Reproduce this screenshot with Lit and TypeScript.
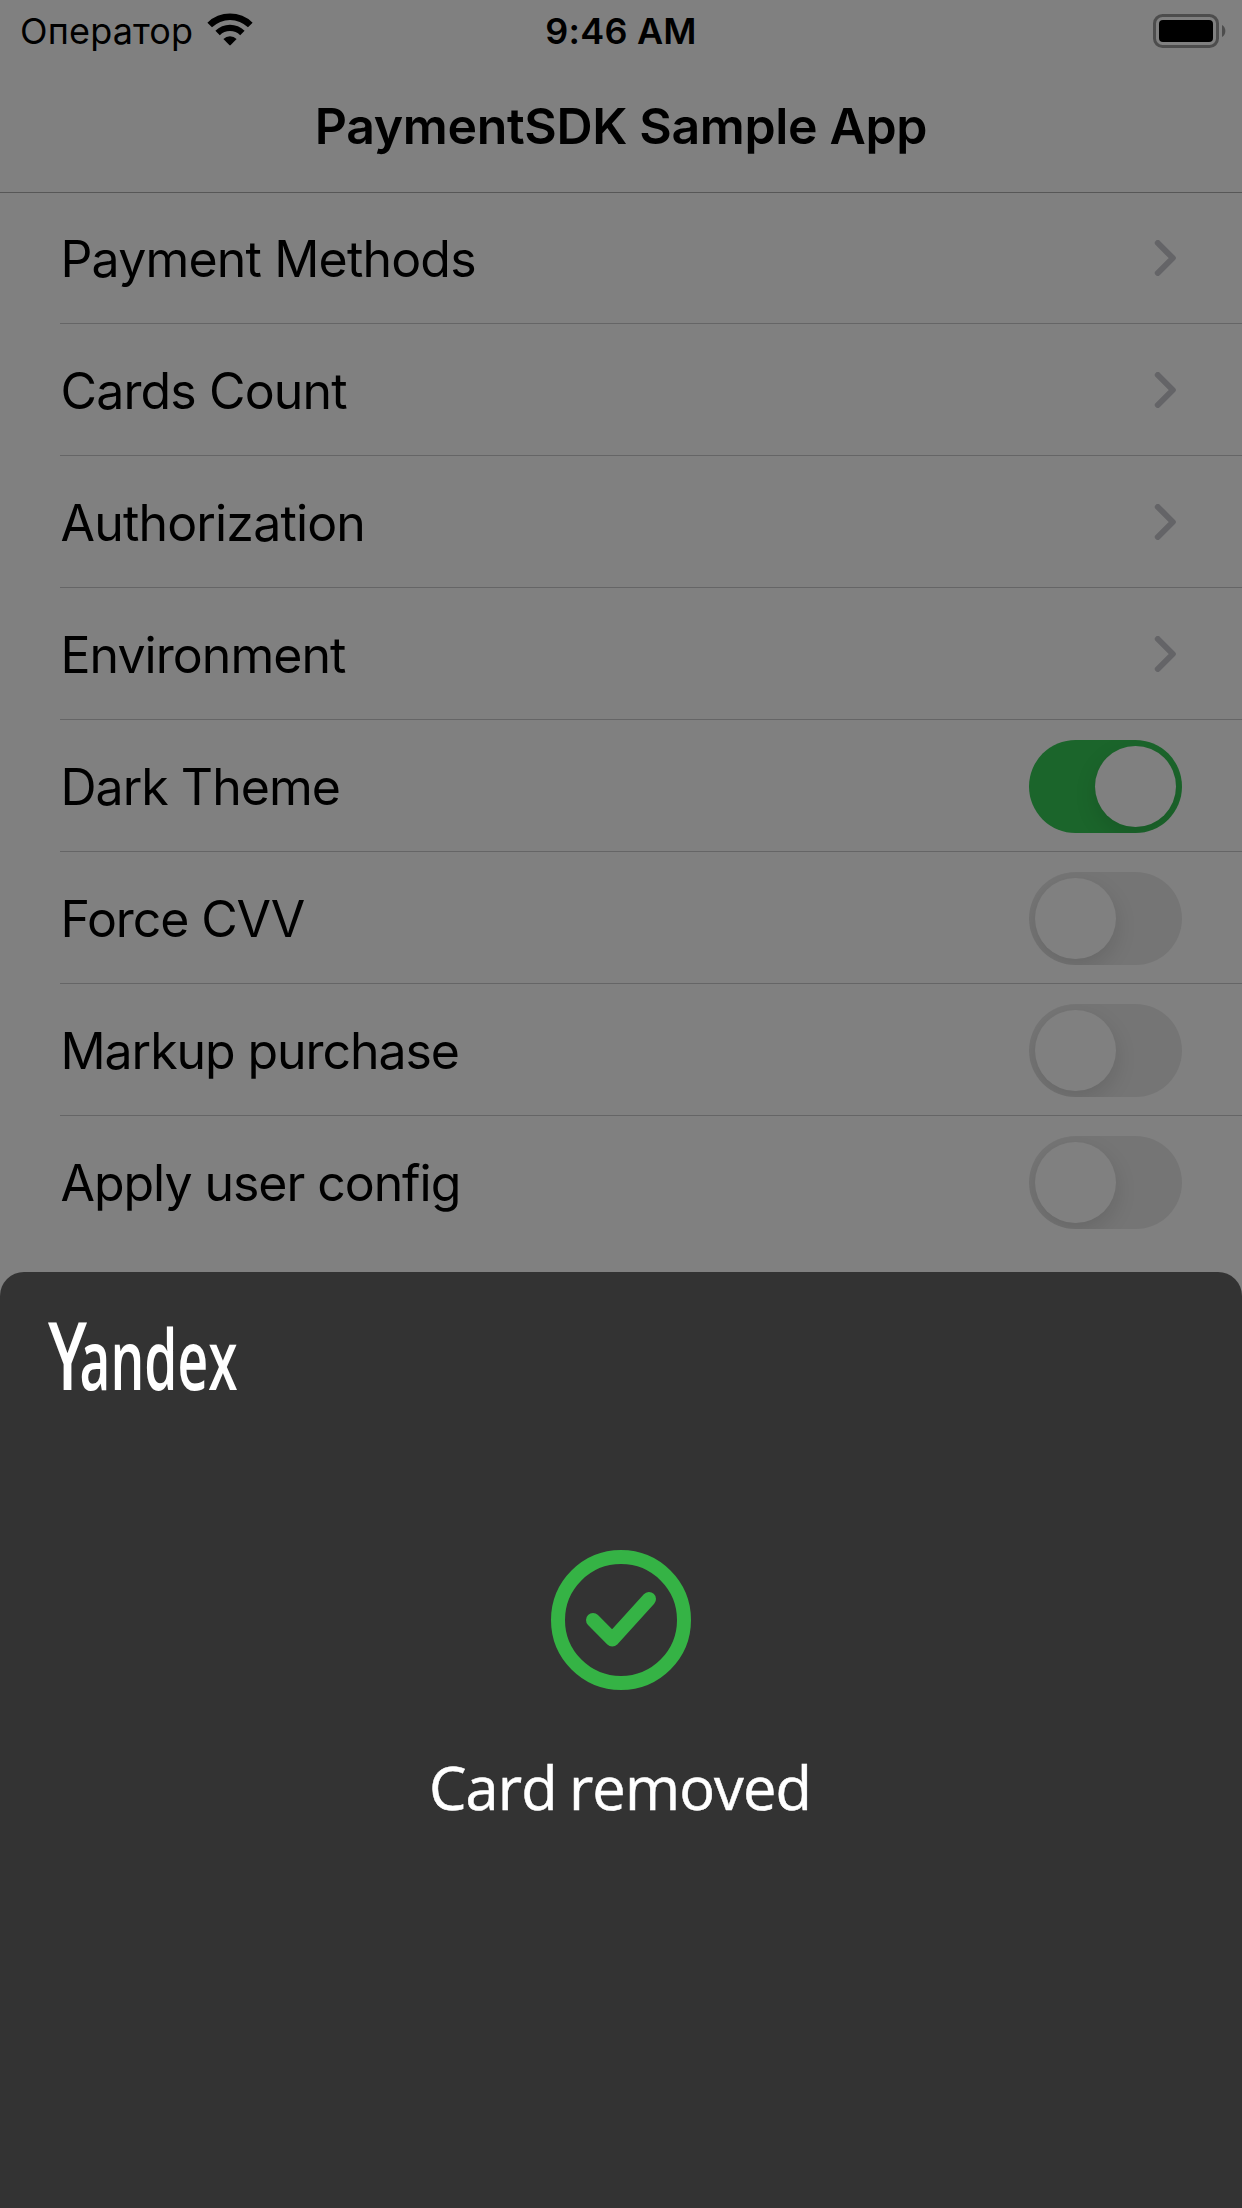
import { LitElement, html, css, nothing } from "lit";
import { customElement, property } from "lit/decorators.js";

interface Setting {
  label: string;
  kind: "link" | "toggle";
  /** Letter spacing of the label, in pixels. */
  tracking: number;
  on?: boolean;
}

const SETTINGS: Setting[] = [
  { label: "Payment Methods", kind: "link", tracking: -0.82 },
  { label: "Cards Count", kind: "link", tracking: -0.85 },
  { label: "Authorization", kind: "link", tracking: -0.83 },
  { label: "Environment", kind: "link", tracking: -0.95 },
  { label: "Dark Theme", kind: "toggle", tracking: -0.98, on: true },
  { label: "Force CVV", kind: "toggle", tracking: -1.1 },
  { label: "Markup purchase", kind: "toggle", tracking: -1.07 },
  { label: "Apply user config", kind: "toggle", tracking: -1.05 },
];

@customElement("status-bar")
class StatusBar extends LitElement {
  static styles = css`
    :host {
      display: grid;
      grid-template-columns: 1fr auto 1fr;
      align-items: center;
      height: 62px;
      padding: 0 16px 2px;
      box-sizing: border-box;
      font-size: 36px;
      line-height: 60px;
    }
    .left {
      display: flex;
      align-items: center;
      gap: 14px;
      padding-left: 4px;
    }
    .carrier {
      padding-top: 1px;
      letter-spacing: 0.15px;
    }
    .time {
      font-weight: 600;
      letter-spacing: 0.2px;
    }
    .wifi {
      display: block;
      margin-top: -1px;
    }
    .battery {
      display: block;
      justify-self: end;
    }
  `;

  render() {
    return html`
      <div class="left">
        <span class="carrier">Оператор</span>
        <svg class="wifi" width="46" height="34" viewBox="0 0 46 34">
          <path d="M0.4 9.7 A32.3 32.3 0 0 1 45.6 9.7 L41 14.3 A25.8 25.8 0 0 0 5 14.3 Z" />
          <path d="M8.4 17.8 A20.8 20.8 0 0 1 37.6 17.8 L33.2 22.2 A14.6 14.6 0 0 0 12.8 22.2 Z" />
          <path d="M16.4 26 A9.6 9.6 0 0 1 29.6 26 L23.7 32.1 Q23 32.8 22.3 32.1 Z" />
        </svg>
      </div>
      <span class="time">9:46 AM</span>
      <svg class="battery" width="73" height="34" viewBox="0 0 73 34">
        <rect x="1.5" y="1.5" width="63" height="31" rx="8" fill="none" stroke="#4d4d4d" stroke-width="3" />
        <rect x="6" y="6" width="54" height="22" rx="4" />
        <path d="M69 11 A7 7 0 0 1 69 23 Z" fill="#4d4d4d" />
      </svg>
    `;
  }
}

@customElement("toggle-switch")
class ToggleSwitch extends LitElement {
  @property({ type: Boolean, reflect: true }) on = false;

  static styles = css`
    :host {
      display: flex;
      width: 153px;
      height: 93px;
      padding: 6px;
      box-sizing: border-box;
      border-radius: 47px;
      overflow: hidden;
      background: #757575;
    }
    :host([on]) {
      justify-content: flex-end;
      background: #1b652b;
    }
    .knob {
      width: 81px;
      height: 81px;
      border-radius: 50%;
      background: #808080;
      box-shadow: 0 8px 22px rgba(0, 0, 0, 0.12);
    }
  `;

  render() {
    return html`<div class="knob"></div>`;
  }
}

@customElement("setting-row")
class SettingRow extends LitElement {
  @property({ attribute: false }) setting!: Setting;

  static styles = css`
    :host {
      display: flex;
      align-items: center;
      justify-content: space-between;
      height: 132px;
      padding: 1px 60px 0 0;
      margin-left: 60px;
      box-sizing: border-box;
      border-bottom: 1px solid #656566;
    }
    :host(:first-of-type) {
      height: 131px;
      padding-top: 0;
    }
    :host(:last-of-type) {
      border-bottom-color: transparent;
    }
    .label {
      font-size: 50px;
      line-height: 60px;
      padding: 2px 0 0 0.5px;
    }
    .chevron {
      display: block;
      margin-right: 6px;
    }
    .switch {
      margin-top: 1px;
    }
  `;

  render() {
    if (!this.setting) return nothing;
    const { label, kind, tracking, on } = this.setting;
    return html`
      <span class="label" style="letter-spacing:${tracking}px">${label}</span>
      ${kind === "link"
        ? html`<svg class="chevron" width="22" height="36" viewBox="0 0 22 36">
            <path
              d="M3.8 3 L18.8 18 L3.8 33"
              fill="none"
              stroke="#646467"
              stroke-width="6"
              stroke-linecap="round"
              stroke-linejoin="round"
            />
          </svg>`
        : html`<toggle-switch class="switch" ?on=${!!on}></toggle-switch>`}
    `;
  }
}

@customElement("result-sheet")
class ResultSheet extends LitElement {
  static styles = css`
    :host {
      display: flex;
      flex-direction: column;
      align-items: center;
      flex: 1;
      padding: 10px 40px 0;
      box-sizing: border-box;
      border-radius: 24px 24px 0 0;
      background: #333333;
      color: #ffffff;
      font-family: "Open Sans", sans-serif;
    }
    .logo {
      display: block;
      align-self: flex-start;
      font-weight: 600;
    }
    .done {
      display: block;
      margin-top: 108px;
    }
    .message {
      margin-top: 57px;
      padding-right: 2px;
      font-size: 59.5px;
      line-height: 80px;
      letter-spacing: -0.85px;
      word-spacing: -2.5px;
      -webkit-text-stroke: 0.5px #ffffff;
    }
  `;

  render() {
    return html`
      <svg class="logo" width="340" height="160" viewBox="0 0 340 160" fill="#ffffff">
        <text x="8" y="108">
          <tspan x="8" font-size="95" textLength="39" lengthAdjust="spacingAndGlyphs">Y</tspan><tspan
            x="39.5"
            font-size="83"
            textLength="158"
            lengthAdjust="spacingAndGlyphs"
            >andex</tspan
          >
        </text>
      </svg>
      <svg class="done" width="140" height="140" viewBox="0 0 140 140" fill="none" stroke="#35b345" stroke-width="14">
        <circle cx="70" cy="70" r="63" />
        <path d="M42 70 L61.3 89.5 L98 49" stroke-linecap="round" stroke-linejoin="round" />
      </svg>
      <div class="message">Card removed</div>
    `;
  }
}

@customElement("app-root")
class AppRoot extends LitElement {
  static styles = css`
    :host {
      display: flex;
      flex-direction: column;
      width: 1242px;
      height: 2208px;
      overflow: hidden;
      background: #808080;
      color: #000000;
      font-family: Inter, "Liberation Sans", sans-serif;
    }
    .nav {
      height: 131px;
      box-sizing: border-box;
      border-bottom: 1px solid #575757;
      text-align: center;
      font-size: 50px;
      font-weight: 600;
      line-height: 128px;
      letter-spacing: -0.35px;
    }
    .list {
      display: flex;
      flex-direction: column;
      height: 1079px;
      flex: none;
    }
  `;

  render() {
    return html`
      <status-bar></status-bar>
      <div class="nav">PaymentSDK Sample App</div>
      <div class="list">
        ${SETTINGS.map((s) => html`<setting-row .setting=${s}></setting-row>`)}
      </div>
      <result-sheet></result-sheet>
    `;
  }
}
